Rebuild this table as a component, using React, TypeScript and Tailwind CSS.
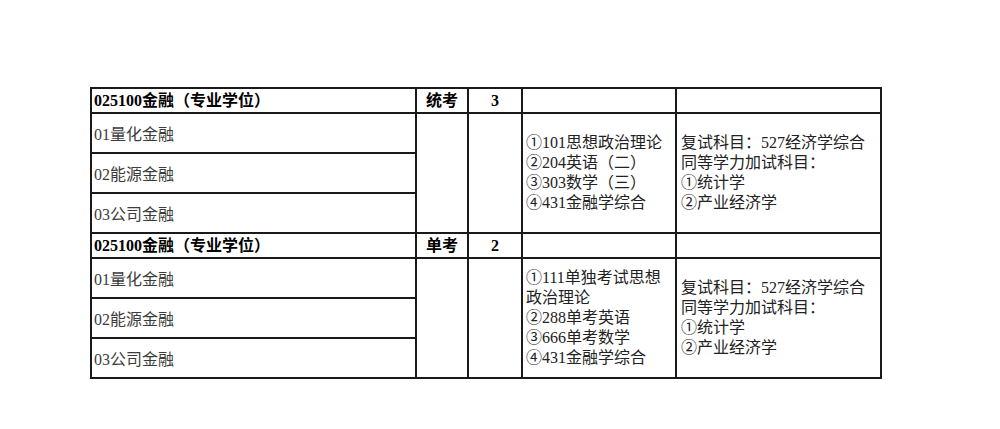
import React from "react";

const font = { fontFamily: '"Liberation Serif", "Noto Sans CJK SC", serif' };

function Block({ majorType, count, subjects }: { majorType: string; count: string; subjects: string[] }) {
  const cell = "border-2 border-[#1a1a1a] p-0";
  return (
    <>
      <tr className="h-[25px]">
        <td className={`${cell} pl-[2px] font-bold text-black`}>025100金融（专业学位）</td>
        <td className={`${cell} text-center font-bold text-black`}>{majorType}</td>
        <td className={`${cell} text-center font-bold text-black`}>{count}</td>
        <td className={cell}></td>
        <td className={cell}></td>
      </tr>
      <tr className="h-[40px]">
        <td className={`${cell} pl-[2px] pt-[4px] text-[#3c3c3c]`}>01量化金融</td>
        <td className={cell} rowSpan={3}></td>
        <td className={cell} rowSpan={3}></td>
        <td className={`${cell} pl-[3px] text-[#222] whitespace-nowrap`} rowSpan={3}>
          {subjects.map((s, i) => (
            <div key={i}>{s}</div>
          ))}
        </td>
        <td className={`${cell} pl-[4px] text-[#222] whitespace-nowrap`} rowSpan={3}>
          <div>复试科目：527经济学综合</div>
          <div>同等学力加试科目：</div>
          <div>①统计学</div>
          <div>②产业经济学</div>
        </td>
      </tr>
      <tr className="h-[40px]">
        <td className={`${cell} pl-[2px] pt-[4px] text-[#3c3c3c]`}>02能源金融</td>
      </tr>
      <tr className="h-[40px]">
        <td className={`${cell} pl-[2px] pt-[4px] text-[#3c3c3c]`}>03公司金融</td>
      </tr>
    </>
  );
}

export default function App() {
  return (
    <div className="w-[1000px] h-[429px] bg-white pt-[87px] pl-[90px]" style={font}>
      <table className="table-fixed border-collapse w-[790px] text-[16px] leading-[20px]">
        <colgroup>
          <col className="w-[325px]" />
          <col className="w-[52px]" />
          <col className="w-[54px]" />
          <col className="w-[154px]" />
          <col className="w-[205px]" />
        </colgroup>
        <tbody>
          <Block
            majorType="统考"
            count="3"
            subjects={["①101思想政治理论", "②204英语（二）", "③303数学（三）", "④431金融学综合"]}
          />
          <Block
            majorType="单考"
            count="2"
            subjects={["①111单独考试思想", "政治理论", "②288单考英语", "③666单考数学", "④431金融学综合"]}
          />
        </tbody>
      </table>
    </div>
  );
}
